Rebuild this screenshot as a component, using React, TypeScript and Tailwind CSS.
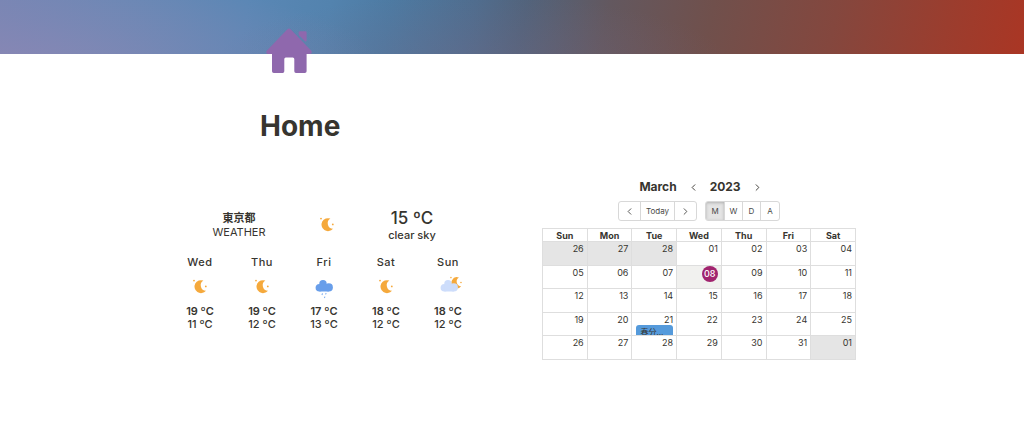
import { ChevronLeft, ChevronRight } from "lucide-react";

type Sky = "moon" | "rain" | "cloudy";

const forecast: { day: string; sky: Sky; high: number; low: number }[] = [
  { day: "Wed", sky: "moon", high: 19, low: 11 },
  { day: "Thu", sky: "moon", high: 19, low: 12 },
  { day: "Fri", sky: "rain", high: 17, low: 13 },
  { day: "Sat", sky: "moon", high: 18, low: 12 },
  { day: "Sun", sky: "cloudy", high: 18, low: 12 },
];

const weekdays = ["Sun", "Mon", "Tue", "Wed", "Thu", "Fri", "Sat"];

const weeks = [
  ["26", "27", "28", "01", "02", "03", "04"],
  ["05", "06", "07", "08", "09", "10", "11"],
  ["12", "13", "14", "15", "16", "17", "18"],
  ["19", "20", "21", "22", "23", "24", "25"],
  ["26", "27", "28", "29", "30", "31", "01"],
];

const views = [
  { key: "M", label: "Month" },
  { key: "W", label: "Week" },
  { key: "D", label: "Day" },
  { key: "A", label: "Agenda" },
];

function HouseIcon() {
  return (
    <svg viewBox="0 0 46 45" className="relative ml-[6px] h-[45px] w-[46px]" fill="#8f68ad" aria-hidden="true">
      <path d="M21.4 1.2Q23 0 24.6 1.2L45.3 22.8Q46.6 25.4 44.2 26H40.6V43.2Q40.6 45 38.8 45H30Q28.3 45 28.3 43.2V31Q28.3 29.4 26.8 29.4H19.8Q18.3 29.4 18.3 31V43.2Q18.3 45 16.6 45H7.8Q6 45 6 43.2V26H1.8Q-0.6 25.4 0.7 22.8Z" />
      <path d="M33.8 3.2H39.4Q40.6 3.2 40.6 4.4V12.6Q40.4 14.2 39 13.2L33 7.2Q31.8 3.4 33.8 3.2Z" />
    </svg>
  );
}

function Moon() {
  return (
    <g fill="#f5a93c">
      <path d="M16.4 6.6A6.5 6.5 0 1 0 19 16.8A5.5 5.5 0 0 1 16.4 6.6Z" />
      <circle cx="7" cy="6.6" r="0.9" />
      <circle cx="18.8" cy="12.4" r="0.9" />
    </g>
  );
}

function Cloud({ fill }: { fill: string }) {
  return (
    <g fill={fill}>
      <circle cx="8.4" cy="13.7" r="3.8" />
      <circle cx="12" cy="9.8" r="3.7" />
      <circle cx="17.8" cy="13.4" r="4.1" />
      <path d="M8.4 10.5h9.4v7H8.4z" />
    </g>
  );
}

function SkyIcon({ sky }: { sky: Sky }) {
  return (
    <svg viewBox="0 0 26 26" className="size-[26px] overflow-visible" aria-hidden="true">
      {sky === "moon" && <Moon />}
      {sky === "rain" && (
        <g>
          <Cloud fill="#689eea" />
          <path
            d="M11.4 19.8l-.3.8M15 19.4l-.3.6M13.8 23l-.3.6"
            stroke="#7eaef0"
            strokeWidth="1.1"
            strokeLinecap="round"
          />
        </g>
      )}
      {sky === "cloudy" && (
        <g transform="translate(1 0)">
          <g transform="translate(9 -2) scale(.85)">
            <Moon />
          </g>
          <Cloud fill="#cdddfb" />
        </g>
      )}
    </svg>
  );
}

function Weather() {
  return (
    <section aria-label="Weather" className="pt-[31px] text-center">
      <div className="grid grid-cols-[2fr_1fr_2fr] items-center">
        <div className="pl-[18px] text-[11px] leading-[14px]">
          <h2 className="font-bold">東京都</h2>
          <p>WEATHER</p>
        </div>
        <div className="flex justify-center pl-2">
          <SkyIcon sky="moon" />
        </div>
        <div className="pr-2">
          <p className="text-[17px] leading-5 font-medium">15 ºC</p>
          <p className="text-[11px] leading-[14px] font-medium">clear sky</p>
        </div>
      </div>
      <div className="mt-[14px] grid grid-cols-5">
        {forecast.map((f) => (
          <div key={f.day} className="flex flex-col items-center pl-[2px] text-[11px] leading-[13px] font-medium">
            <h3 className="tracking-wider">{f.day}</h3>
            <div className="my-[5px]">
              <SkyIcon sky={f.sky} />
            </div>
            <p className="font-semibold">{f.high} ºC</p>
            <p>{f.low} ºC</p>
          </div>
        ))}
      </div>
    </section>
  );
}

function Calendar() {
  return (
    <section aria-label="Calendar">
      <div className="flex items-center justify-center gap-[11px] pl-1 text-[12px] leading-5 font-bold">
        <h2>March</h2>
        <button aria-label="Previous year">
          <ChevronLeft className="size-[11px]" />
        </button>
        <span>2023</span>
        <button aria-label="Next year">
          <ChevronRight className="size-[11px]" />
        </button>
      </div>
      <div className="mt-1 flex justify-center gap-2 text-[8px] text-[#4a4a48]">
        <div className="flex h-5 divide-x divide-[#d8d8d8] rounded-[3px] border border-[#d8d8d8]">
          <button aria-label="Previous month" className="flex w-[22px] items-center justify-center">
            <ChevronLeft className="size-[11px]" />
          </button>
          <button className="w-[34px]">Today</button>
          <button aria-label="Next month" className="flex w-[21px] items-center justify-center">
            <ChevronRight className="size-[11px]" />
          </button>
        </div>
        <div className="flex h-5 divide-x divide-[#d8d8d8] overflow-hidden rounded-[3px] border border-[#d8d8d8]">
          {views.map((v) => (
            <button
              key={v.key}
              aria-label={v.label}
              className={v.key === "M" ? "w-[19px] bg-[#e4e4e4] shadow-[inset_0_1px_3px_#b0b0b0]" : "w-[18px]"}
            >
              {v.key}
            </button>
          ))}
        </div>
      </div>
      <table className="mt-[7px] h-[132px] w-full table-fixed border-collapse text-[9px] leading-[11px]">
        <thead>
          <tr className="h-[13px]">
            {weekdays.map((d) => (
              <th key={d} scope="col" className="border border-[#dedede] p-0 font-bold">{d}</th>
            ))}
          </tr>
        </thead>
        <tbody>
          {weeks.map((week, w) => (
            <tr key={w}>
              {week.map((d, i) => {
                const outside = (w === 0 && i < 3) || (w === 4 && i === 6);
                const today = w === 1 && i === 3;
                return (
                  <td
                    key={i}
                    className={`relative border border-[#dedede] p-0 pt-[1px] pr-[3px] text-right align-top ${outside ? "bg-[#e5e5e5]" : today ? "bg-[#f1f1ef]" : ""}`}
                  >
                    {today ? (
                      <span className="absolute top-0 right-[3px] flex size-4 items-center justify-center rounded-full bg-[#a1246f] font-medium text-white">
                        {d}
                      </span>
                    ) : (
                      d
                    )}
                    {d === "21" && (
                      <a
                        href="#event"
                        className="absolute right-[3px] bottom-0 left-1 h-[10px] overflow-hidden rounded-t-[3px] bg-[#559adb] px-1 pt-[2px] text-left text-[8px] leading-[11px] text-[#37352f]"
                      >
                        春分…
                      </a>
                    )}
                  </td>
                );
              })}
            </tr>
          ))}
        </tbody>
      </table>
    </section>
  );
}

export default function App() {
  return (
    <div className="bg-white font-[Inter,'Noto_Sans_CJK_JP',sans-serif] text-[#37352f]">
      <div className="h-[54px] bg-[radial-gradient(380px_90px_at_0%_120%,#8d87b4d0_0%,#8d87b460_50%,#8d87b400_100%),radial-gradient(260px_70px_at_46%_120%,#7a6a8a50_0%,#7a6a8a00_100%),linear-gradient(102deg,#7586b4_0%,#6888b5_12%,#5a87b5_24%,#5383ae_32%,#4d7aa2_38%,#4f6d8e_46%,#52637b_51%,#63585f_59%,#70504c_69%,#84473e_81%,#9b3d2e_92%,#aa3624_100%)]" />
      <header className="mx-auto -mt-[26px] w-full max-w-[504px]">
        <HouseIcon />
        <h1 className="mt-[33px] text-[28px] leading-10 font-bold">Home</h1>
      </header>
      <main className="mx-auto mt-[31px] grid w-full max-w-[688px] grid-cols-[310fr_314fr] gap-16">
        <Weather />
        <Calendar />
      </main>
    </div>
  );
}
